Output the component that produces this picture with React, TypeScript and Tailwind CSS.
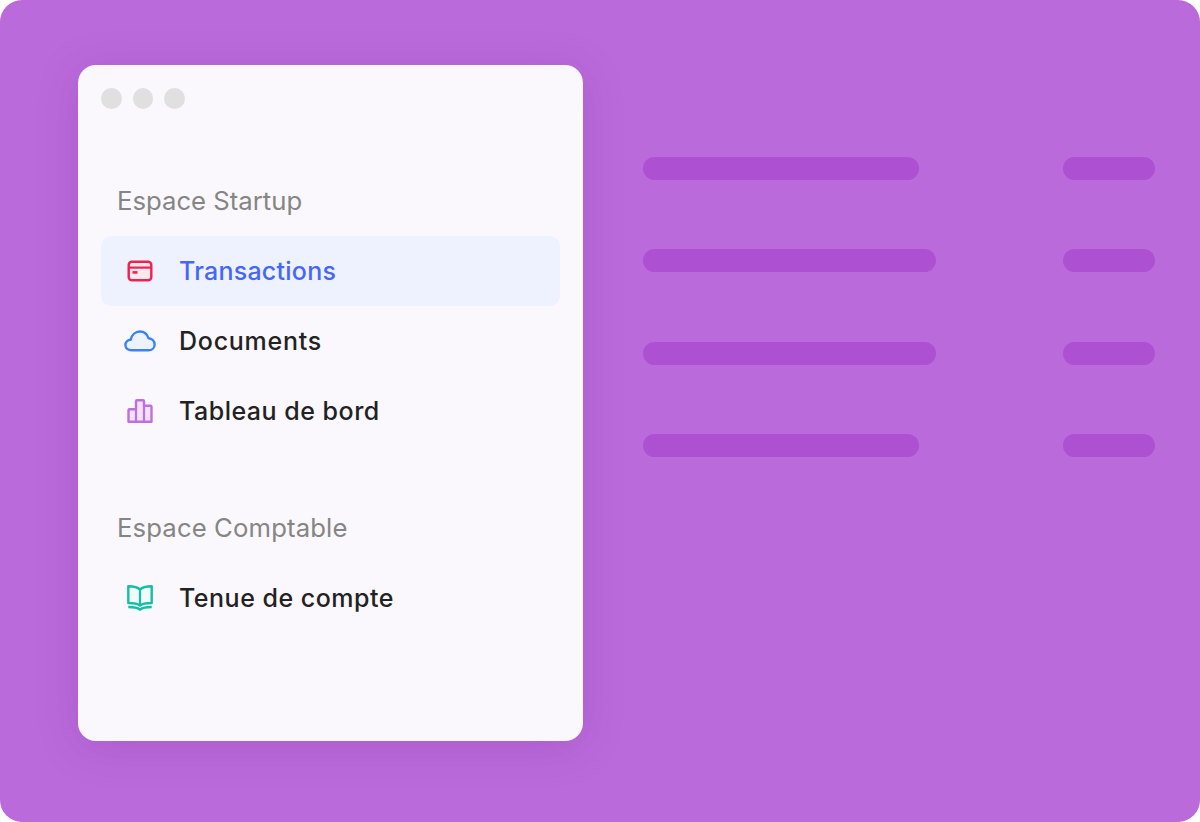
import React from "react";

function CardIcon() {
  return (
    <svg width="26" height="22" viewBox="0 0 26 22" fill="none">
      <rect x="1.7" y="1.7" width="22.6" height="18.6" rx="3.2" fill="#FDE8EE" stroke="#F0214F" strokeWidth="2.4" />
      <path d="M1.7 7.6H24.3" stroke="#F0214F" strokeWidth="2.2" />
      <path d="M5.5 12.4H10.5" stroke="#F0214F" strokeWidth="2.6" />
    </svg>
  );
}

function CloudIcon() {
  return (
    <svg width="32" height="22" viewBox="0 0 32 22" fill="none">
      <path
        d="M7.5 20.3C4 20.3 1.4 18 1.4 15C1.4 12 3.7 9.9 6.7 9.7C7.7 4.9 11.4 1.5 15.8 1.5C20 1.5 23.3 4.2 24.5 8.2C28 8.4 30.6 11 30.6 14.4C30.6 17.9 28 20.3 24.5 20.3H7.5Z"
        fill="#EDF2FE"
        stroke="#3B82F6"
        strokeWidth="2.4"
        strokeLinejoin="round"
      />
    </svg>
  );
}

function ChartIcon() {
  return (
    <svg width="26" height="24" viewBox="0 0 26 24" fill="none">
      <path
        d="M1.5 22.7V11.2C1.5 10.6 1.9 10.2 2.5 10.2H9V2.3C9 1.7 9.4 1.3 10 1.3H16C16.6 1.3 17 1.7 17 2.3V6.8H23.5C24.1 6.8 24.5 7.2 24.5 7.8V22.7H1.5Z"
        fill="#F1E2F8"
        stroke="#C06FDE"
        strokeWidth="2.4"
        strokeLinejoin="round"
      />
      <path d="M9 10.2V22.7M17 6.8V22.7" stroke="#C06FDE" strokeWidth="2.2" />
    </svg>
  );
}

function BookIcon() {
  return (
    <svg width="26" height="26" viewBox="0 0 26 26" fill="none">
      <path
        d="M13 4.6C11 2.4 7.4 1.3 1.3 1.3V18C7.4 18 11 18.8 13 20.6C15 18.8 18.6 18 24.7 18V1.3C18.6 1.3 15 2.4 13 4.6Z"
        fill="#EEFBF8"
        stroke="#14BFA3"
        strokeWidth="2.4"
        strokeLinejoin="round"
      />
      <path d="M13 4.6V20.6" stroke="#14BFA3" strokeWidth="2.2" />
      <path d="M1.3 22C7.4 22 10.6 22.6 13 24.6C15.4 22.6 18.6 22 24.7 22" stroke="#14BFA3" strokeWidth="2.4" />
    </svg>
  );
}

function NavRow({
  icon,
  label,
  tracking,
  active,
}: {
  icon: React.ReactNode;
  label: string;
  tracking: string;
  active?: boolean;
}) {
  return (
    <div className={`flex h-[70px] items-center rounded-[10px] ${active ? "bg-[#EEF2FE]" : ""}`}>
      <div className="flex w-[78px] shrink-0 items-center justify-center">{icon}</div>
      <span className={`pt-[2px] text-[25px] font-[450] ${tracking} ${active ? "text-[#4666FA]" : "text-[#222222]"}`}>
        {label}
      </span>
    </div>
  );
}

function SectionLabel({ children, className }: { children: React.ReactNode; className: string }) {
  return <div className={`h-[36px] pl-4 text-[25.7px] leading-[36px] text-[#858585] ${className}`}>{children}</div>;
}

function Line({ left }: { left: string }) {
  return (
    <div className="flex h-[23px] items-center justify-between">
      <div className={`h-[23px] rounded-full bg-[#AE50D2] ${left}`} />
      <div className="h-[23px] w-[92px] rounded-full bg-[#AE50D2]" />
    </div>
  );
}

export default function App() {
  return (
    <div className="h-[822px] w-[1200px] bg-white font-['Inter','Liberation_Sans',sans-serif]">
      <div className="flex h-full items-start rounded-[22px] bg-[#BB6ADB] pl-[78px] pt-[65px]">
        <div className="h-[676px] w-[505px] shrink-0 rounded-[18px] bg-[#FAF8FC] px-[23px] pt-[23px] shadow-[0_6px_40px_rgba(110,40,140,0.22)]">
          <div className="flex h-[21px] gap-[11.2px]">
            <div className="h-[20.5px] w-[20.5px] rounded-full bg-[#E0E0E0]" />
            <div className="h-[20.5px] w-[20.5px] rounded-full bg-[#E0E0E0]" />
            <div className="h-[20.5px] w-[20.5px] rounded-full bg-[#E0E0E0]" />
          </div>
          <SectionLabel className="mb-[17px] mt-[74px]">Espace Startup</SectionLabel>
          <NavRow icon={<CardIcon />} label="Transactions" tracking="tracking-[0.25px]" active />
          <NavRow icon={<CloudIcon />} label="Documents" tracking="tracking-[0.75px]" />
          <NavRow icon={<ChartIcon />} label="Tableau de bord" tracking="tracking-[0.5px]" />
          <SectionLabel className="mb-[17px] mt-[64px] tracking-[0.12px]">Espace Comptable</SectionLabel>
          <NavRow icon={<BookIcon />} label="Tenue de compte" tracking="tracking-[0.5px]" />
        </div>
        <div className="ml-[60px] flex w-[512px] flex-col gap-[69.4px] pt-[92px]">
          <Line left="w-[276px]" />
          <Line left="w-[293px]" />
          <Line left="w-[293px]" />
          <Line left="w-[276px]" />
        </div>
      </div>
    </div>
  );
}
